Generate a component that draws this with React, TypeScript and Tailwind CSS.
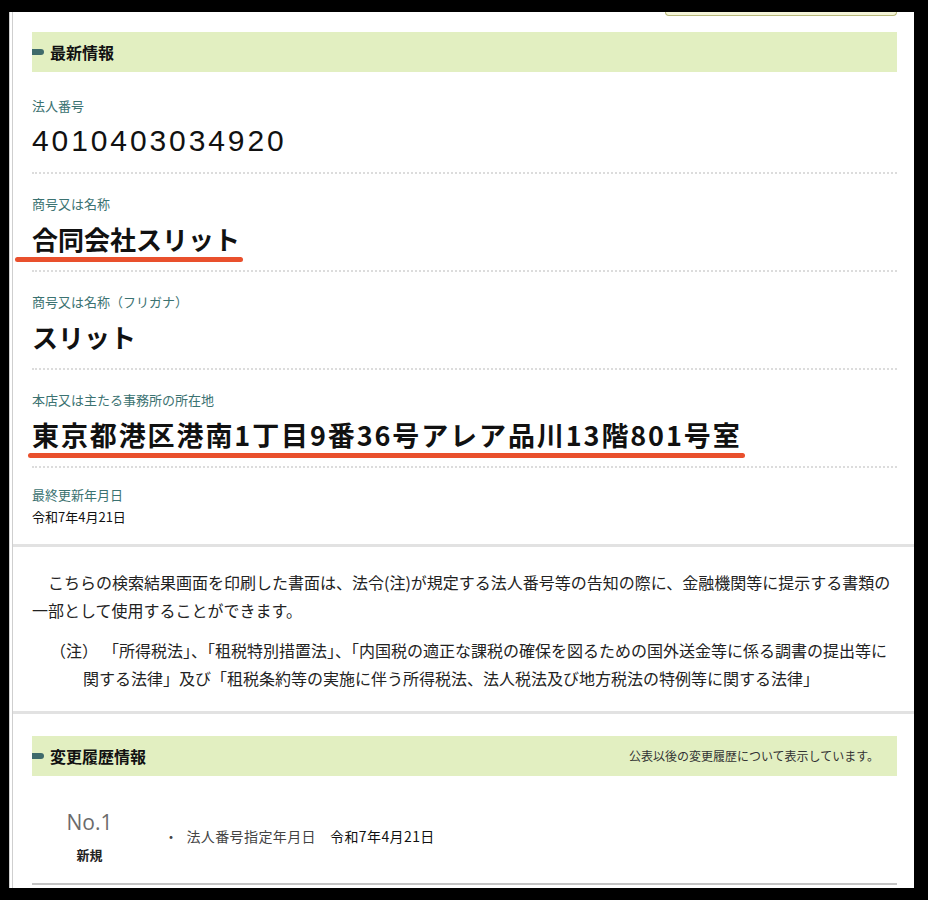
import React from 'react';

const jp = '"Noto Sans CJK JP", "Noto Sans", sans-serif';
const num = '"Liberation Sans", "Noto Sans CJK JP", sans-serif';

function SectionBar({ title, note }: { title: string; note?: string }) {
  return (
    <div className="flex h-[40px] items-center bg-[#e2efc1]">
      <span className="h-[6px] w-[12px] rounded-r-full bg-[#3f6b6b]" />
      <span className="ml-[6px] text-[16px] font-bold text-[#111]">{title}</span>
      {note && <span className="ml-auto mr-[18px] text-[12px] text-[#333]">{note}</span>}
    </div>
  );
}

function Mark({ left, width }: { left: number; width: number }) {
  return (
    <span
      className="absolute bottom-[-6px] h-[5px] rounded-full bg-[#e9502d]"
      style={{ left, width }}
    />
  );
}

interface Field {
  label: string;
  value: string;
  kind: 'num' | 'name' | 'addr';
  mark?: { left: number; width: number };
}

const fields: Field[] = [
  { label: '法人番号', value: '4010403034920', kind: 'num' },
  { label: '商号又は名称', value: '合同会社スリット', kind: 'name', mark: { left: -17, width: 228 } },
  { label: '商号又は名称（フリガナ）', value: 'スリット', kind: 'name' },
  {
    label: '本店又は主たる事務所の所在地',
    value: '東京都港区港南1丁目9番36号アレア品川13階801号室',
    kind: 'addr',
    mark: { left: -4, width: 717 },
  },
];

export default function App() {
  return (
    <div className="h-[900px] w-[928px] bg-black pb-[12px] pl-[9px] pr-[14px] pt-[12px]" style={{ fontFamily: jp }}>
      <div className="h-full overflow-hidden border-l-[4px] border-double border-[#cfcfcf] bg-white">
        <div className="px-[19px] pr-[17px]">
          <div className="flex justify-end">
            <div className="h-[4px] w-[232px] rounded-b-[6px] border-x border-b border-[#b9b97a] bg-[#f4f4d8]" />
          </div>
          <div className="mt-[16px]">
            <SectionBar title="最新情報" />
          </div>
          <div className="mt-[4px]">
            {fields.map((f) => (
              <div key={f.label} className="border-b-2 border-dotted border-[#dcdcdc] pb-[14px] pt-[22px]">
                <div className="text-[13px] leading-[16px] text-[#3b7271]">{f.label}</div>
                <div className="mt-[10px] h-[34px] whitespace-nowrap leading-[34px] text-[#111]">
                  {f.kind === 'num' && (
                    <span className="text-[30px] tracking-[2.9px]" style={{ fontFamily: num }}>
                      {f.value}
                    </span>
                  )}
                  {f.kind === 'name' && (
                    <span className="relative inline-block text-[26px] font-bold">
                      {f.value}
                      {f.mark && <Mark left={f.mark.left} width={f.mark.width} />}
                    </span>
                  )}
                  {f.kind === 'addr' && (
                    <span className="relative inline-block text-[27px] font-bold tracking-[1.9px]">
                      {f.value}
                      {f.mark && <Mark left={f.mark.left} width={f.mark.width} />}
                    </span>
                  )}
                </div>
              </div>
            ))}
            <div className="pb-[19px] pt-[19px]">
              <div className="text-[13px] leading-[16px] text-[#3b7271]">最終更新年月日</div>
              <div className="mt-[6px] text-[13px] leading-[16px] text-[#111]">令和7年4月21日</div>
            </div>
          </div>
        </div>

        <div className="h-[3px] bg-[#e2e2e2]" />

        <div className="px-[19px] pb-[19px] pr-[17px] pt-[21px] text-[16px] leading-[28px] text-[#222]">
          <p className="indent-[1em] whitespace-nowrap">
            こちらの検索結果画面を印刷した書面は、法令(注)が規定する法人番号等の告知の際に、金融機関等に提示する書類の
          </p>
          <p className="whitespace-nowrap">一部として使用することができます。</p>
          <div className="mt-[12px] flex whitespace-nowrap pl-[18px]">
            <span className="w-[53px]">（注）</span>
            <div>
              <p>「所得税法」、「租税特別措置法」、「内国税の適正な課税の確保を図るための国外送金等に係る調書の提出等に</p>
              <p className="-ml-[20px]">関する法律」及び「租税条約等の実施に伴う所得税法、法人税法及び地方税法の特例等に関する法律」</p>
            </div>
          </div>
        </div>

        <div className="h-[3px] bg-[#e2e2e2]" />

        <div className="px-[19px] pr-[17px] pt-[22px]">
          <SectionBar title="変更履歴情報" note="公表以後の変更履歴について表示しています。" />
          <div className="flex h-[109px] items-center border-b-2 border-[#c4c4c4] pt-[14px]">
            <div className="flex w-[120px] flex-col items-center pr-[5px]">
              <span className="text-[21px] leading-[26px] text-[#6b6b6b]" style={{ fontFamily: '"Open Sans", "Noto Sans", sans-serif' }}>
                No.1
              </span>
              <span className="mt-[10px] text-[13px] font-bold text-[#222]">新規</span>
            </div>
            <div className="ml-[12px] flex items-center text-[14px] tracking-[0.4px] text-[#444]">
              <span className="mr-[8px]">・</span>
              <span>法人番号指定年月日</span>
              <span className="ml-[14px] text-[#111]">令和7年4月21日</span>
            </div>
          </div>
        </div>
      </div>
    </div>
  );
}
